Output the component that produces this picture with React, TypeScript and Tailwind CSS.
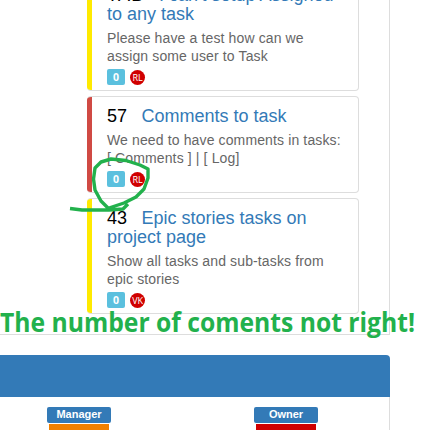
import type { ReactNode } from "react";

type CardProps = {
  id: string;
  idClass?: string;
  title: ReactNode;
  body: ReactNode;
  who: string;
  color: string;
  height: string;
};

function Card({ id, idClass = "", title, body, who, color, height }: CardProps) {
  return (
    <article className={`flex w-[272px] overflow-hidden rounded border border-l-0 border-[#ddd] bg-white ${height}`}>
      <div className={`-my-px w-[5px] shrink-0 ${color}`} />
      <div className="flex flex-col items-start whitespace-nowrap pl-[15px] pt-[10px]">
        <h4 className="text-[18px] leading-[19px] text-[#337ab7]">
          <span className={`mr-[14.5px] text-black ${idClass}`}>{id}</span>
          {title}
        </h4>
        <p className="mt-[5px] text-[14px] leading-[18px] tracking-[0.13px] text-[#666]">{body}</p>
        <div className="mt-[4px] flex h-4 items-center gap-[5px]">
          <span className="flex h-4 w-[18px] items-center justify-center rounded-[2px] bg-[#5bc0de] font-['Open_Sans',sans-serif] text-[10.5px] font-bold leading-none text-white">0</span>
          <span className="flex size-[15px] items-center justify-center rounded-full bg-[#d00000] font-['Open_Sans',sans-serif] text-[9px] leading-none tracking-[-0.2px] text-white">{who}</span>
        </div>
      </div>
    </article>
  );
}

function Role({ name, color }: { name: string; color: string }) {
  return (
    <div className="flex w-16 flex-col items-center">
      <span className="h-4 w-16 rounded-[2px] bg-[#337ab7] text-center text-[11px] font-bold leading-[15px] text-white">{name}</span>
      <div className={`mt-px h-[6px] w-[60px] ${color}`} />
    </div>
  );
}

export default function App() {
  return (
    <main className="relative h-[430px] w-[434px] overflow-hidden bg-white font-['Liberation_Sans',Arial,sans-serif]">
      <section className="h-[335px] w-[390px] overflow-hidden border-b border-r border-[#ddd] pl-[87px]">
        <div className="-mt-[25px] flex flex-col gap-[5px]">
          <Card id="TAB" idClass="tracking-[1.3px]" title={<>I can't setup Assigned<br />to any task</>} body={<>Please have a test how can we<br />assign some user to Task</>} who="RL" color="bg-[#ffea00]" height="h-[116px]" />
          <Card id="57" title="Comments to task" body={<>We need to have comments in tasks:<br />[ Comments ] | [ Log]</>} who="RL" color="bg-[#d04a44]" height="h-[97px]" />
          <Card id="43" title={<>Epic stories tasks on<br />project page</>} body={<>Show all tasks and sub-tasks from<br />epic stories</>} who="VK" color="bg-[#ffea00]" height="h-[116px]" />
        </div>
      </section>
      <section className="mt-5 h-[75px] w-[390px]">
        <div className="h-[42px] rounded-tr bg-[#337ab7]" />
        <div className="flex h-[33px] gap-[143px] overflow-hidden border-r border-[#ddd] pl-[47px] pt-[10px]">
          <Role name="Manager" color="bg-[#f08000]" />
          <Role name="Owner" color="bg-[#d00000]" />
        </div>
      </section>
      <svg className="absolute inset-0" width="434" height="430" viewBox="0 0 434 430">
        <path d="M70 208.5 L82 210 L109 210 L123 209 L128 204 M109 209 L101 201 L95 190 L93.5 179 L95 168 L101 162 L111 159 L126 160.5 L140 165 L148 169 L148 178 L144 189 L136 197 L124 203 L109 208" fill="none" stroke="#22b14c" strokeWidth="3.4" strokeLinejoin="round" />
        <text x="0" y="332" textLength="415" lengthAdjust="spacingAndGlyphs" fill="#22b14c" fontSize="26" fontWeight="700" fontFamily="'Open Sans', sans-serif">The number of coments not right!</text>
      </svg>
    </main>
  );
}
